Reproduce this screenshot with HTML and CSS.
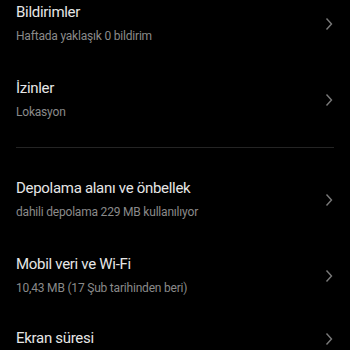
FILE: index.html
```html
<!DOCTYPE html>
<html lang="tr">
<head>
<meta charset="utf-8">
<link rel="stylesheet" href="styles.css">
</head>
<body>
<div class="list">
  <div class="item">
    <div class="text">
      <div class="title">Bildirimler</div>
      <div class="sub">Haftada yaklaşık 0 bildirim</div>
    </div>
    <svg class="chev" viewBox="0 0 8 14" width="8" height="14"><path d="M1.5 1.5 L6.5 7 L1.5 12.5" fill="none" stroke="#7a7a7a" stroke-width="1.4"/></svg>
  </div>
  <div class="item">
    <div class="text">
      <div class="title">İzinler</div>
      <div class="sub">Lokasyon</div>
    </div>
    <svg class="chev" viewBox="0 0 8 14" width="8" height="14"><path d="M1.5 1.5 L6.5 7 L1.5 12.5" fill="none" stroke="#7a7a7a" stroke-width="1.4"/></svg>
  </div>
  <div class="divider"></div>
  <div class="item">
    <div class="text">
      <div class="title">Depolama alanı ve önbellek</div>
      <div class="sub">dahili depolama 229 MB kullanılıyor</div>
    </div>
    <svg class="chev" viewBox="0 0 8 14" width="8" height="14"><path d="M1.5 1.5 L6.5 7 L1.5 12.5" fill="none" stroke="#7a7a7a" stroke-width="1.4"/></svg>
  </div>
  <div class="item">
    <div class="text">
      <div class="title">Mobil veri ve Wi-Fi</div>
      <div class="sub">10,43 MB (17 Şub tarihinden beri)</div>
    </div>
    <svg class="chev" viewBox="0 0 8 14" width="8" height="14"><path d="M1.5 1.5 L6.5 7 L1.5 12.5" fill="none" stroke="#7a7a7a" stroke-width="1.4"/></svg>
  </div>
  <div class="item single">
    <div class="text">
      <div class="title">Ekran süresi</div>
    </div>
    <svg class="chev" viewBox="0 0 8 14" width="8" height="14"><path d="M1.5 1.5 L6.5 7 L1.5 12.5" fill="none" stroke="#7a7a7a" stroke-width="1.4"/></svg>
  </div>
</div>
</body>
</html>
```

FILE: styles.css
```css
html, body {
  margin: 0;
  padding: 0;
  background: #000;
  overflow: hidden;
  height: 100%;
}
body {
  font-family: Roboto, "Noto Sans", sans-serif;
}
.list {
  margin-top: -18px;
  display: flex;
  flex-direction: column;
}
.item {
  display: flex;
  align-items: center;
  padding: 20px 17px 14px 16px;
}
.item.single {
  padding-top: 18px;
}
.text {
  flex: 1;
  display: flex;
  flex-direction: column;
  gap: 6px;
}
.title {
  font-size: 15px;
  line-height: 20px;
  letter-spacing: -0.3px;
  color: #e6e6e6;
}
.sub {
  font-size: 12px;
  line-height: 16px;
  letter-spacing: -0.2px;
  color: #8a8a8a;
}
.chev {
  flex: none;
  margin-top: 2px;
}
.divider {
  height: 1px;
  background: #242424;
  margin: 13px 16px 10px 16px;
}
```
